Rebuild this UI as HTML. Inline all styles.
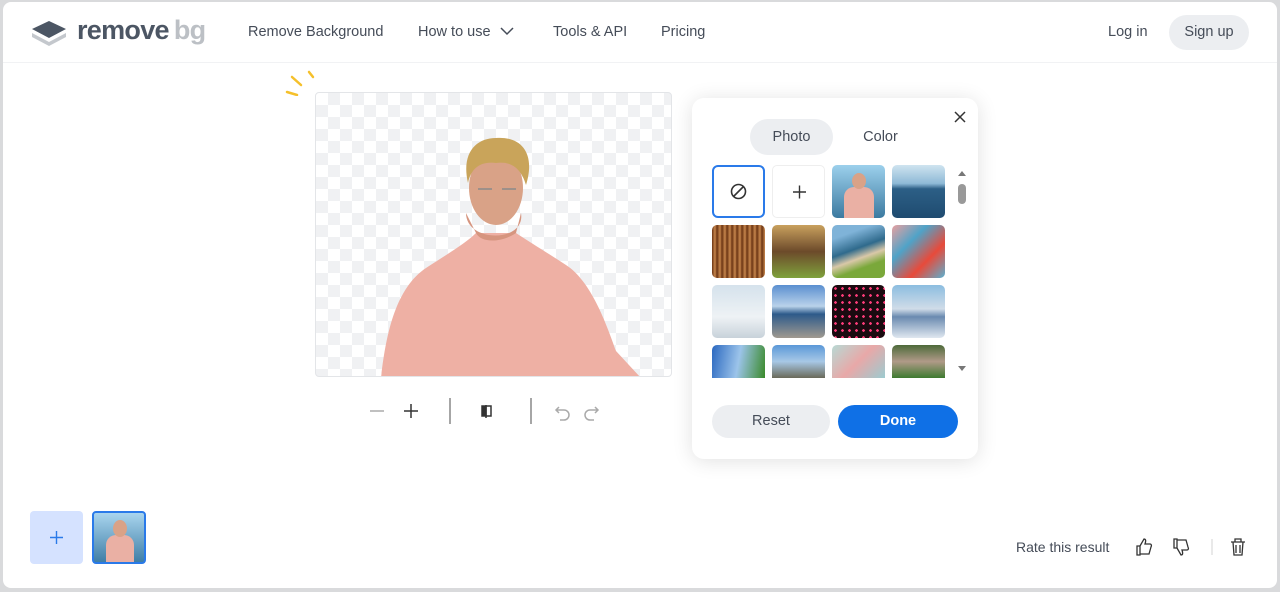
<!DOCTYPE html>
<html><head><style>
*{box-sizing:border-box;margin:0;padding:0}
body{width:1280px;height:592px;background:#d9dadc;font-family:"Liberation Sans",sans-serif;position:relative;overflow:hidden}
.page{position:absolute;left:3px;top:2px;width:1274px;height:586px;background:#fff;border-radius:8px}
.nav{position:absolute;left:0;top:0;width:100%;height:61px;border-bottom:1px solid #f1f2f4}
.nav a{position:absolute;top:22px;font-size:14.5px;color:#454c58}
.signup{position:absolute;left:1166px;top:13px;width:80px;height:35px;border-radius:18px;background:#eceef1;font-size:14.5px;color:#454c58;text-align:center;line-height:35px}
.canvas{position:absolute;left:312px;top:90px;width:357px;height:285px;border:1px solid #e3e5e8;border-radius:4px;background-color:#fff;background-image:linear-gradient(45deg,#f0f1f3 25%,transparent 25%,transparent 75%,#f0f1f3 75%),linear-gradient(45deg,#f0f1f3 25%,transparent 25%,transparent 75%,#f0f1f3 75%);background-size:24px 24px;background-position:0 0,12px 12px;overflow:hidden}
.pop{position:absolute;left:689px;top:96px;width:286px;height:361px;background:#fff;border-radius:12px;box-shadow:0 2px 20px rgba(0,0,0,.12)}
.tab{position:absolute;top:21px;height:36px;line-height:36px;font-size:14.5px;color:#454c58;text-align:center;border-radius:18px}
.th{position:absolute;width:53px;height:53px;border-radius:5px;overflow:hidden}
.btn{position:absolute;top:307px;height:33px;border-radius:17px;text-align:center;line-height:33px;font-size:14.5px}
.ic{position:absolute}
</style></head><body>
<div class="page">
<div class="nav">
<svg class="ic" style="left:27px;top:16px" width="38" height="28" viewBox="0 0 38 28"><path d="M2 15 L19 24 L36 15 L36 19 L19 28 L2 19Z" fill="#c4c8cd"/><path d="M19 3 L36 11 L19 20 L2 11Z" fill="#4c5664"/></svg>
<div style="position:absolute;left:74px;top:13px;font-size:27px;font-weight:bold;color:#4c5664;letter-spacing:-.7px">remove<span style="color:#bcc0c5;margin-left:5px">bg</span></div>
<a style="left:245px">Remove Background</a>
<a style="left:415px">How to use</a>
<svg class="ic" style="left:497px;top:25px" width="14" height="9"><path d="M1 1l6 6 6-6" fill="none" stroke="#454c58" stroke-width="1.5"/></svg>
<a style="left:550px">Tools &amp; API</a>
<a style="left:658px">Pricing</a>
<a style="left:1105px">Log in</a>
<div class="signup">Sign up</div>
</div>
<svg class="ic" style="left:282px;top:64px" width="34" height="30"><g stroke="#f5c02b" stroke-width="2.5" stroke-linecap="round"><path d="M2 26l10 3"/><path d="M7 11l9 8"/><path d="M24 6l4 5"/></g></svg>
<div class="canvas">
<svg width="357" height="285" viewBox="0 0 357 285">
<path d="M65 285 C70 240 80 195 110 175 C130 162 150 150 160 140 L200 140 C215 150 235 162 250 172 C275 188 290 230 300 258 L325 285Z" fill="#eeb0a4"/>
<path d="M150 120 C150 150 210 150 205 120 L200 140 C185 150 165 150 160 140Z" fill="#d6957f"/>
<ellipse cx="180" cy="95" rx="27" ry="37" fill="#d9a287"/>
<path d="M152 90 C145 60 160 45 180 45 C205 43 220 60 210 92 C205 75 195 68 180 70 C165 68 155 75 152 90Z" fill="#c9a45a"/>
<path d="M162 96h14M186 96h14" stroke="#8a8a8a" stroke-width="1.5"/>
</svg>
</div>
<svg class="ic" style="left:364px;top:396px" width="250" height="26"><g stroke="#333" stroke-width="1.5" fill="none"><path d="M3 13h14" stroke="#aaa"/><path d="M37 13h14M44 6v14"/><path d="M83 0v26" stroke="#888"/><path d="M119 7v13M119 8h-4v10h4M119 8h5v10h-5"/><rect x="116" y="9" width="3" height="8" fill="#333"/><path d="M164 0v26" stroke="#888"/><path d="M192 9l-3 3 3 3M189 12h8a5 5 0 010 10h-4" stroke="#aaa"/><path d="M228 9l3 3-3 3M231 12h-8a5 5 0 000 10h4" stroke="#aaa"/></g></svg>
<div class="pop">
<svg class="ic" style="left:261px;top:12px" width="14" height="14"><path d="M2 2l10 10M12 2L2 12" stroke="#333" stroke-width="1.5"/></svg>
<div class="tab" style="left:58px;width:83px;background:#eceef1">Photo</div>
<div class="tab" style="left:147px;width:83px">Color</div>
<div class="th" style="left:20px;top:67px;border:2px solid #2a7ae9;border-radius:6px"><svg width="49" height="49"><circle cx="24.5" cy="24.5" r="7" stroke="#333" stroke-width="1.6" fill="none"/><path d="M20 29l9-9" stroke="#333" stroke-width="1.6"/></svg></div>
<div class="th" style="left:80px;top:67px;border:1px solid #eee"><svg width="53" height="53"><path d="M20 26h13M26.5 19.5v13" stroke="#333" stroke-width="1.4"/></svg></div>
<div class="th" style="left:140px;top:67px;background:linear-gradient(#9cd0ec,#3c7aa0)"><div style="position:absolute;left:12px;top:22px;width:30px;height:31px;background:#eab0a4;border-radius:10px 10px 0 0"></div><div style="position:absolute;left:20px;top:8px;width:14px;height:16px;background:#d9a287;border-radius:50%"></div></div>
<div class="th" style="left:200px;top:67px;background:linear-gradient(#cfe4f0 0,#8eb9d6 35%,#2c5f86 45%,#1f4b70)"></div>
<div class="th" style="left:20px;top:127px;background:repeating-linear-gradient(90deg,#6b3413 0,#c7874d 3px,#6b3413 5px)"></div>
<div class="th" style="left:80px;top:127px;background:linear-gradient(#c9a15e,#6c4a2a 50%,#7fa23c)"></div>
<div class="th" style="left:140px;top:127px;background:linear-gradient(160deg,#7fb3d8 20%,#2f6a8c 45%,#d9c8a8 60%,#7aa83a 75%)"></div>
<div class="th" style="left:200px;top:127px;background:linear-gradient(135deg,#e9a0a0,#4fa3c8,#e84a3a,#5ab0d0)"></div>
<div class="th" style="left:20px;top:187px;background:linear-gradient(#d5e2ec,#eef2f5 60%,#c8d2da)"></div>
<div class="th" style="left:80px;top:187px;background:linear-gradient(#5a8fd0,#b9d2ea 40%,#2d5a8a 55%,#a09a90)"></div>
<div class="th" style="left:140px;top:187px;background:radial-gradient(circle,#ff3c7a 25%,#1a0a10 30%) 0 0/7px 7px,#111"></div>
<div class="th" style="left:200px;top:187px;background:linear-gradient(#8cbde0,#d0dce8 45%,#6a8ab0 60%,#dfe7f0)"></div>
<div class="th" style="left:20px;top:247px;height:33px;border-radius:5px 5px 0 0;background:linear-gradient(100deg,#2a68c0,#9cc4ea 50%,#3a8a2a)"></div>
<div class="th" style="left:80px;top:247px;height:33px;border-radius:5px 5px 0 0;background:linear-gradient(#5a98d8,#a7c8e6 50%,#6a6a5a)"></div>
<div class="th" style="left:140px;top:247px;height:33px;border-radius:5px 5px 0 0;background:linear-gradient(135deg,#b7d9d4,#e8a8a8,#9ccbd0)"></div>
<div class="th" style="left:200px;top:247px;height:33px;border-radius:5px 5px 0 0;background:linear-gradient(#4d6a3a,#b09a88 50%,#3d7a30)"></div>
<svg class="ic" style="left:264px;top:70px" width="12" height="208"><path d="M2 8l4-5 4 5z" fill="#777"/><rect x="2" y="16" width="8" height="20" rx="4" fill="#999"/><path d="M2 198l4 5 4-5z" fill="#777"/></svg>
<div class="btn" style="left:20px;width:118px;background:#eceef1;color:#454c58">Reset</div>
<div class="btn" style="left:146px;width:120px;background:#0f70e6;color:#fff;font-weight:bold">Done</div>
</div>
<div style="position:absolute;left:27px;top:509px;width:53px;height:53px;border-radius:4px;background:#d5e2ff"><svg width="53" height="53"><path d="M20 26.5h13M26.5 20v13" stroke="#2a7ae9" stroke-width="1.4"/></svg></div>
<div style="position:absolute;left:89px;top:509px;width:54px;height:53px;border:2px solid #2a7ae9;border-radius:4px;overflow:hidden;background:linear-gradient(#a9d5ee,#3f7ea6)"><div style="position:absolute;left:12px;top:22px;width:28px;height:31px;background:#eab0a4;border-radius:10px 10px 0 0"></div><div style="position:absolute;left:19px;top:7px;width:14px;height:17px;background:#d9a287;border-radius:50%"></div></div>
<div style="position:absolute;left:1013px;top:537px;font-size:14px;color:#454c58">Rate this result</div>
<svg class="ic" style="left:1132px;top:535px" width="115" height="20"><g stroke="#333" stroke-width="1.3" fill="none"><path d="M2 9h3v9H2zM5 9l4-7c2 0 2 2 1 5h5c1 0 2 1 1 3l-2 7H5"/><path d="M39 11h3V2h-3zM42 11l4 7c2 0 2-2 1-5h5c1 0 2-1 1-3l-2-7h-9"/><path d="M77 2v16" stroke="#ddd"/><path d="M96 5h14M100 5V2h6v3M98 5l1 13h8l1-13M101 8v8M105 8v8"/></g></svg>
</div>
</body></html>
